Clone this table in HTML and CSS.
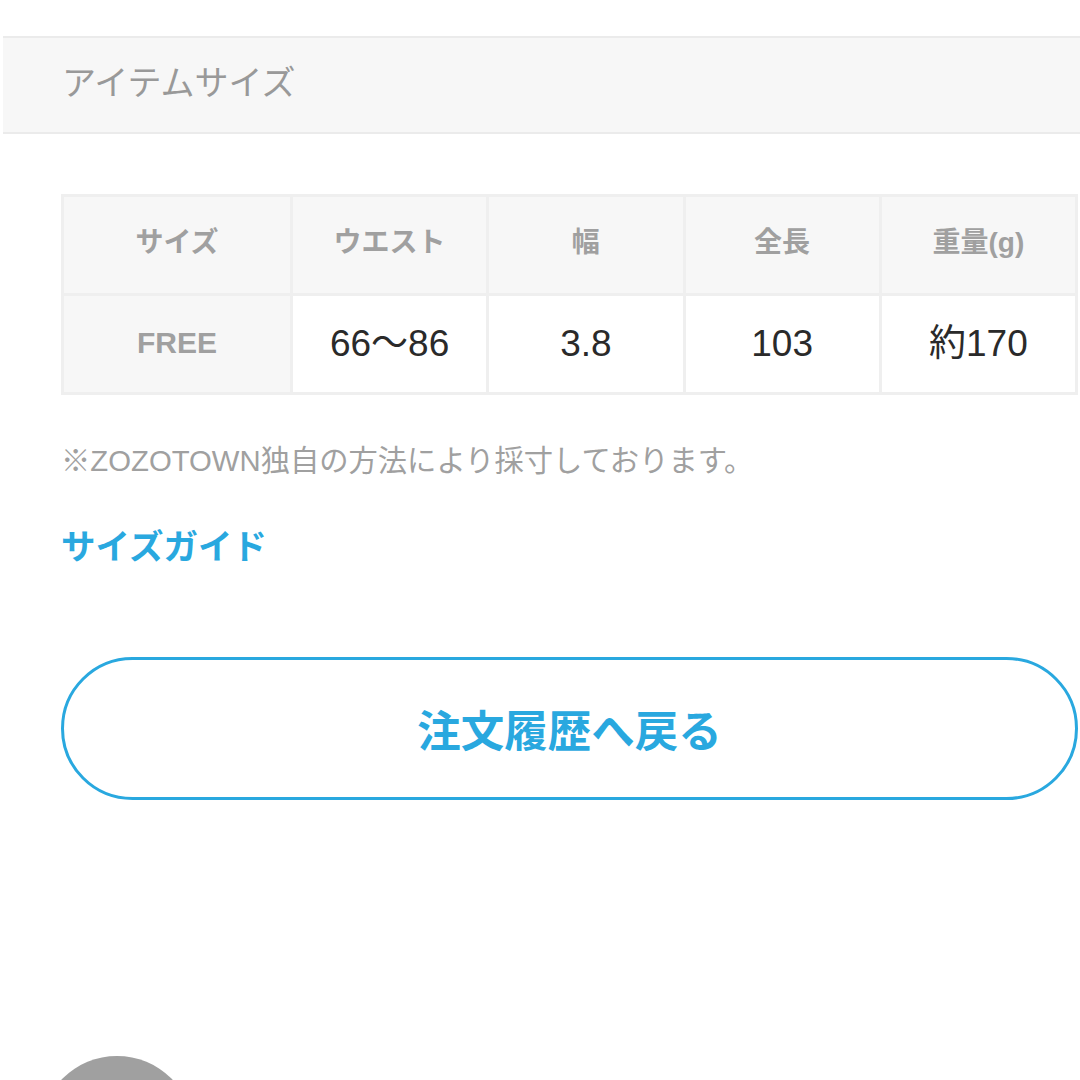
FILE: index.html
```html
<!DOCTYPE html>
<html lang="ja">
<head>
<meta charset="utf-8">
<link rel="stylesheet" href="styles.css">
</head>
<body>
<div class="page">
  <div class="band"><span class="band-title">アイテムサイズ</span></div>
  <div class="content">
    <div class="size-table">
      <div class="cell head">サイズ</div>
      <div class="cell head">ウエスト</div>
      <div class="cell head">幅</div>
      <div class="cell head">全長</div>
      <div class="cell head">重量(g)</div>
      <div class="cell head head-size">FREE</div>
      <div class="cell val">66〜86</div>
      <div class="cell val">3.8</div>
      <div class="cell val">103</div>
      <div class="cell val">約170</div>
    </div>
    <p class="note">※ZOZOTOWN独自の方法により採寸しております。</p>
    <a class="guide">サイズガイド</a>
    <div class="back-btn">注文履歴へ戻る</div>
    <div class="circle"></div>
  </div>
</div>
</body>
</html>
```

FILE: styles.css
```css
html, body {
  margin: 0;
  padding: 0;
  background: #fff;
}
body {
  font-family: "Liberation Sans", "Noto Sans CJK JP", sans-serif;
  width: 1080px;
  height: 1080px;
  overflow: hidden;
}
.page {
  padding-top: 36px;
}
.band {
  margin-left: 3px;
  height: 94px;
  background: #f7f7f7;
  border-top: 2px solid #ebebeb;
  border-bottom: 2px solid #ebebeb;
  display: flex;
  align-items: center;
  padding-left: 59px;
}
.band-title {
  font-size: 34px;
  line-height: 40px;
  margin-top: -4px;
  color: #999;
}
.content {
  padding-left: 61px;
  padding-top: 60px;
}
.size-table {
  width: 1017px;
  box-sizing: border-box;
  display: grid;
  grid-template-columns: 226px repeat(4, 1fr);
  grid-auto-rows: 96px;
  gap: 3px;
  padding: 3px;
  background: #efefef;
}
.cell {
  display: flex;
  align-items: center;
  justify-content: center;
  line-height: 1;
}
.head {
  background: #f7f7f7;
  color: #a0a0a0;
  font-weight: bold;
  font-size: 28px;
  padding-bottom: 4px;
}
.head-size {
  font-size: 30px;
  padding-bottom: 2px;
}
.val {
  background: #fff;
  color: #2a2a2a;
  font-size: 37px;
  padding-bottom: 2px;
}
.note {
  margin: 46px 0 0;
  font-size: 29.3px;
  line-height: 40px;
  color: #a0a0a0;
}
.guide {
  display: block;
  margin-top: 44px;
  font-size: 34.5px;
  line-height: 44px;
  font-weight: bold;
  color: #29a8df;
}
.back-btn {
  margin-top: 88px;
  width: 1017px;
  height: 143px;
  box-sizing: border-box;
  border: 3px solid #29a8df;
  border-radius: 72px;
  display: flex;
  align-items: center;
  justify-content: center;
  font-size: 43.5px;
  font-weight: bold;
  color: #29a8df;
}
.circle {
  margin-top: 256px;
  margin-left: -21px;
  width: 154px;
  height: 154px;
  border-radius: 50%;
  background: #a0a0a0;
}
```
